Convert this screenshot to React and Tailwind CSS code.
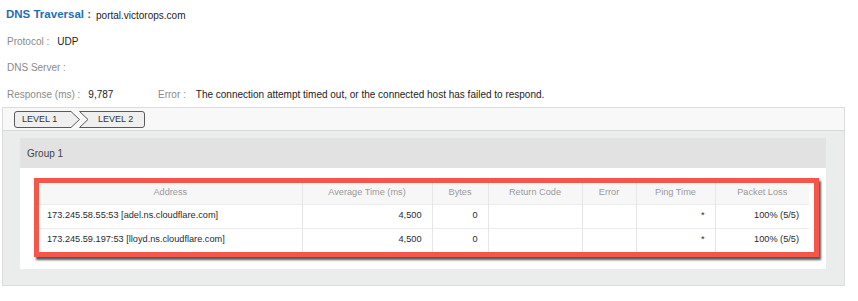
import React from "react";

const columns = [
  { label: "Address", width: "w-[263px]" },
  { label: "Average Time (ms)", width: "w-[130px]" },
  { label: "Bytes", width: "w-[56px]" },
  { label: "Return Code", width: "w-[94px]" },
  { label: "Error", width: "w-[54px]" },
  { label: "Ping Time", width: "w-[79px]" },
  { label: "Packet Loss", width: "w-[94px]" },
];

const rows = [
  {
    address: "173.245.58.55:53 [adel.ns.cloudflare.com]",
    avg: "4,500",
    bytes: "0",
    code: "",
    error: "",
    ping: "*",
    loss: "100% (5/5)",
  },
  {
    address: "173.245.59.197:53 [lloyd.ns.cloudflare.com]",
    avg: "4,500",
    bytes: "0",
    code: "",
    error: "",
    ping: "*",
    loss: "100% (5/5)",
  },
];

const Step = ({ label, first }) => (
  <div className={`relative w-[66px] h-[17px] flex items-center ${first ? "pl-[8px]" : "pl-[19px] -ml-[1px]"}`}>
    <svg className="absolute inset-0" width="66" height="17" viewBox="0 0 66 17">
      {first ? (
        <path d="M3 0.5 H57 L65.5 8.5 L57 16.5 H3 Q0.5 16.5 0.5 14 V3 Q0.5 0.5 3 0.5 Z" fill="#efefef" stroke="#5a5a5a" />
      ) : (
        <path d="M0.5 0.5 H63 Q65.5 0.5 65.5 3 V14 Q65.5 16.5 63 16.5 H0.5 L9 8.5 Z" fill="#efefef" stroke="#5a5a5a" />
      )}
    </svg>
    <span className="relative text-[9px] text-[#333] leading-none">{label}</span>
  </div>
);

const Label = ({ children }) => (
  <span className="text-[10px] text-[#8a8a8a]">{children}</span>
);

const Value = ({ children, className = "" }) => (
  <span className={`text-[10px] text-[#222] ${className}`}>{children}</span>
);

export default function App() {
  return (
    <div className="w-[858px] h-[301px] bg-white font-['Liberation_Sans',Arial,sans-serif] overflow-hidden">
      <div className="pl-[7px] pt-[2px] flex flex-col">
        <div className="h-[26px] flex items-center -ml-[1px]">
          <span className="text-[11.5px] font-bold text-[#1f6eb4]">DNS Traversal :</span>
          <Value className="ml-[5px]">portal.victorops.com</Value>
        </div>
        <div className="h-[26px] flex items-center">
          <Label>Protocol :</Label>
          <Value className="ml-[8px]">UDP</Value>
        </div>
        <div className="h-[27px] flex items-center">
          <Label>DNS Server :</Label>
        </div>
        <div className="h-[26px] flex items-center">
          <div className="w-[151px] flex items-center">
            <Label>Response (ms) :</Label>
            <Value className="ml-[8px]">9,787</Value>
          </div>
          <Label>Error :</Label>
          <Value className="ml-[10px]">
            The connection attempt timed out, or the connected host has failed to respond.
          </Value>
        </div>
      </div>

      <div className="ml-[2px] w-[843px] border border-[#dcdcdc]">
        <div className="h-[23px] bg-[#f8f8f8] border-b border-[#d8d8d8] flex items-center pl-[11px]">
          <Step label="LEVEL 1" first />
          <Step label="LEVEL 2" />
        </div>

        <div className="bg-[#ebecec] pt-[7px] pl-[17px] pr-[18px] pb-[16px]">
          <div className="h-[30px] bg-[#e2e2e2] flex items-center pl-[7px]">
            <span className="text-[10px] text-[#444]">Group 1</span>
          </div>
          <div className="bg-white pt-[10px] pb-[12px] pl-[14px] pr-[7px]">
            <div className="border-[5px] border-[#f4574a] shadow-[2px_3px_2px_rgba(0,0,0,0.65)]">
              <table className="table-fixed border-collapse w-[770px] text-[9.2px]">
                <thead>
                  <tr className="h-[21px] bg-[#f7f7f7]">
                    {columns.map((c) => (
                      <th
                        key={c.label}
                        className={`${c.width} font-normal text-[#9a9a9a] text-center border-r border-[#e6e6e6] last:border-r-0`}
                      >
                        {c.label}
                      </th>
                    ))}
                  </tr>
                </thead>
                <tbody className="text-[#2a2a2a]">
                  {rows.map((r) => (
                    <tr key={r.address} className="h-[24px] border-t border-[#ececec]">
                      <td className="pl-[8px] text-left border-r border-[#e6e6e6] whitespace-nowrap">{r.address}</td>
                      <td className="pr-[10px] text-right border-r border-[#e6e6e6]">{r.avg}</td>
                      <td className="pr-[10px] text-right border-r border-[#e6e6e6]">{r.bytes}</td>
                      <td className="pr-[10px] text-right border-r border-[#e6e6e6]">{r.code}</td>
                      <td className="pr-[10px] text-right border-r border-[#e6e6e6]">{r.error}</td>
                      <td className="pr-[10px] text-right border-r border-[#e6e6e6]">{r.ping}</td>
                      <td className="pr-[10px] text-right">{r.loss}</td>
                    </tr>
                  ))}
                </tbody>
              </table>
            </div>
          </div>
        </div>
      </div>
    </div>
  );
}
